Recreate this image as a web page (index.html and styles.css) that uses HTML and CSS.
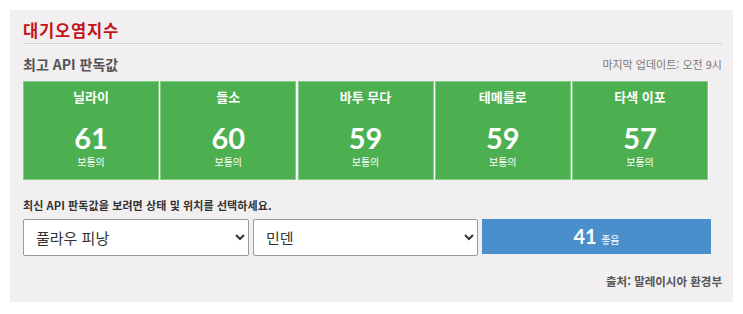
FILE: index.html
```html
<!DOCTYPE html>
<html lang="ko">

<head>
  <meta charset="UTF-8">
  <meta name="viewport" content="width=device-width, initial-scale=1.0">
  <title>대기오염지수</title>
  <link rel="stylesheet" href="styles.css">
</head>

<body>
  <div class="api-panel">
    <h2 class="api-title">대기오염지수</h2>

    <div class="api-head">
      <h3>최고 API 판독값</h3>
      <span class="updated">마지막 업데이트: 오전 9시</span>
    </div>

    <div class="api-cards">
      <div class="api-card">
        <div class="place">닐라이</div>
        <div class="value">61</div>
        <div class="status">보통의</div>
      </div>
      <div class="api-card">
        <div class="place">들소</div>
        <div class="value">60</div>
        <div class="status">보통의</div>
      </div>
      <div class="api-card">
        <div class="place">바투 무다</div>
        <div class="value">59</div>
        <div class="status">보통의</div>
      </div>
      <div class="api-card">
        <div class="place">테메를로</div>
        <div class="value">59</div>
        <div class="status">보통의</div>
      </div>
      <div class="api-card">
        <div class="place">타색 이포</div>
        <div class="value">57</div>
        <div class="status">보통의</div>
      </div>
    </div>

    <p class="api-hint">최신 API 판독값을 보려면 상태 및 위치를 선택하세요.</p>

    <div class="api-lookup">
      <select id="state">
        <option>풀라우 피낭</option>
        <option>셀랑고르</option>
        <option>조호르</option>
      </select>
      <select id="location">
        <option>민덴</option>
        <option>발릭 풀라우</option>
      </select>
      <div class="api-result"><span class="num">41</span> <span class="lbl">좋음</span></div>
    </div>

    <div class="api-source">출처: 말레이시아 환경부</div>
  </div>
</body>

</html>
```

FILE: styles.css
```css
body {
  font-family: "Noto Sans CJK KR", "Noto Sans", sans-serif;
  background: #fff;
  margin: 10px;
}

.api-panel {
  background: #f1eff0;
  padding: 10px 11px 13px 13px;
}

.api-title {
  margin: 0;
  padding-bottom: 3px;
  font-size: 16.5px;
  line-height: 20px;
  letter-spacing: 0.8px;
  color: #c3141b;
  border-bottom: 1px solid #d2d0d1;
}

.api-head {
  display: flex;
  justify-content: space-between;
  align-items: center;
  margin-top: 12px;
  height: 16px;
}

.api-head h3 {
  margin: 0;
  font-size: 14px;
  line-height: 16px;
  color: #555;
}

.updated {
  font-size: 11px;
  color: #7a7a7a;
}

.api-cards {
  display: grid;
  grid-template-columns: repeat(5, 136px);
  gap: 1.25px;
  margin-top: 9px;
}

.api-card {
  background: #4caf50;
  border: 1px solid #86cc89;
  box-shadow: 1px 0 0 #fff;
  color: #fff;
  text-align: center;
  padding: 6px 0 10px;
}

.place {
  font-size: 13px;
  font-weight: bold;
  line-height: 18px;
}

.value {
  font-family: Lato, "Noto Sans", sans-serif;
  font-size: 29px;
  font-weight: bold;
  line-height: 32px;
  margin-top: 16px;
}

.status {
  font-size: 10px;
  line-height: 14px;
  margin-top: 1px;
}

.api-hint {
  margin: 17px 0 0;
  font-size: 11px;
  font-weight: bold;
  line-height: 16px;
  letter-spacing: 0.1px;
  color: #333;
}

.api-lookup {
  display: grid;
  grid-template-columns: 226px 225px 229px;
  gap: 4px;
  align-items: start;
  margin-top: 6px;
}

select {
  height: 37px;
  font-family: "Noto Sans CJK KR", sans-serif;
  font-size: 15px;
  color: #333;
  background: #fff;
  border: 1px solid #9a9a9a;
  border-radius: 2px;
  padding: 0 8px;
}

.api-result {
  background: #4a8fcc;
  color: #fff;
  height: 35px;
  line-height: 35px;
  text-align: center;
}

.api-result .num {
  font-family: Lato, "Noto Sans", sans-serif;
  font-size: 20px;
  font-weight: bold;
}

.api-result .lbl {
  font-size: 10px;
}

.api-source {
  margin-top: 17px;
  text-align: right;
  font-size: 11.5px;
  font-weight: bold;
  line-height: 16px;
  color: #555;
}
```
